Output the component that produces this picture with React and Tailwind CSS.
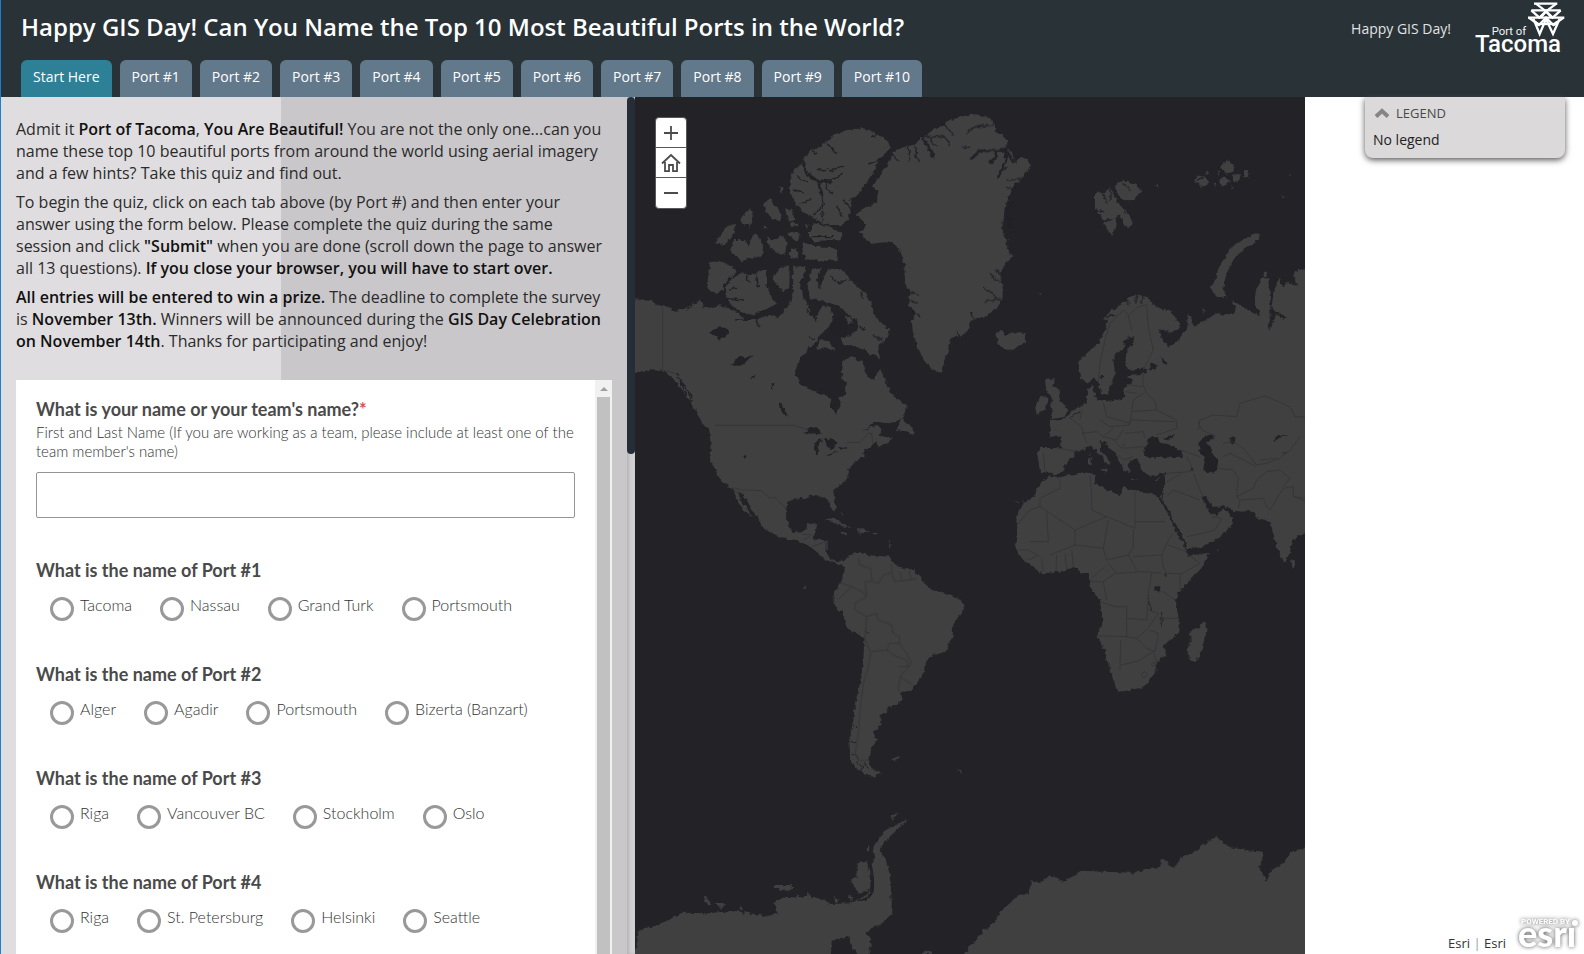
import React, { useState } from 'react';

const tabs = ['Start Here', 'Port #1', 'Port #2', 'Port #3', 'Port #4', 'Port #5', 'Port #6', 'Port #7', 'Port #8', 'Port #9', 'Port #10'];

const questions = [
  { id: 'port1', title: 'What is the name of Port #1', options: ['Tacoma', 'Nassau', 'Grand Turk', 'Portsmouth'] },
  { id: 'port2', title: 'What is the name of Port #2', options: ['Alger', 'Agadir', 'Portsmouth', 'Bizerta (Banzart)'] },
  { id: 'port3', title: 'What is the name of Port #3', options: ['Riga', 'Vancouver BC', 'Stockholm', 'Oslo'] },
  { id: 'port4', title: 'What is the name of Port #4', options: ['Riga', 'St. Petersburg', 'Helsinki', 'Seattle'] },
];

const PortLogo = () => (
  <svg viewBox="0 0 300 168" className="h-14 w-[100px] overflow-visible" role="img" aria-label="Port of Tacoma">
    <g fill="none" stroke="#fff" strokeWidth="7">
      <path d="M192 11h70M184 31h88M174 53h109" />
      <path d="M198 11l30 23 31-23M184 31l24 22 20-19 20 19 24-22" />
      <path d="M176 53l31 22 21-22 22 22 31-22" />
      <path d="M190 56l19 46 19-45 21 45 20-46M207 75l-12-10M250 75l12-10M228 34v0M212 53l16-19 18 19" />
      <path d="M196 72h66" />
    </g>
    <text x="65" y="104" fill="#f1f2f3" fontFamily="Roboto, sans-serif" fontSize="34">Port of</text>
    <text x="15" y="155" fill="#fff" fontFamily="Roboto, sans-serif" fontSize="72" fontWeight="500">Tacoma</text>
  </svg>
);

const WorldMap = () => (
  <svg viewBox="635 97 670 857" preserveAspectRatio="xMinYMin slice" className="block h-full w-full bg-[#232227]" aria-hidden="true">
    <defs>
      <filter id="coast" filterUnits="userSpaceOnUse" x="600" y="60" width="760" height="940">
        <feTurbulence type="fractalNoise" baseFrequency="0.22" numOctaves="2" seed="4" result="noise" />
        <feDisplacementMap in="SourceGraphic" in2="noise" scale="5" xChannelSelector="R" yChannelSelector="G" />
      </filter>
    </defs>
    <g filter="url(#coast)" fill="#3f3f41">
      {/* North America */}
      <g transform="translate(630 90) scale(.3333)">
        <path d="M-30 622L15 628 60 632 100 650 140 662 165 655 190 640 210 628 218 650 235 655 270 645 300 660 330 672 345 690 375 690 400 680 420 675 445 685 470 650 480 640 490 600 485 560 490 530 530 528 520 560 510 580 515 610 530 640 556 690 575 645 600 655 610 680 600 710 570 735 560 760 540 770 525 790 505 815 495 850 510 880 530 895 570 910 600 922 602 950 620 975 632 945 625 925 645 915 648 880 635 860 640 810 670 800 700 820 712 860 730 870 750 835 765 870 785 910 815 935 828 945 825 965 820 980 800 995 775 1000 735 995 700 1025 735 1005 755 1015 750 1035 770 1045 790 1042 770 1060 740 1073 745 1055 725 1065 700 1085 700 1100 675 1115 655 1140 655 1165 630 1185 610 1200 612 1225 618 1255 612 1265 600 1250 592 1225 570 1217 540 1217 520 1227 490 1225 470 1245 468 1280 475 1310 490 1325 510 1328 530 1320 535 1302 560 1300 555 1320 550 1348 590 1352 590 1390 600 1410 620 1413 635 1408 650 1420 640 1428 620 1422 585 1410 568 1392 540 1370 500 1350 475 1350 430 1332 400 1315 390 1290 360 1255 340 1215 325 1202 330 1230 350 1255 368 1285 345 1265 325 1240 310 1200 275 1175 255 1140 243 1110 240 1040 238 1020 215 1000 205 975 180 935 150 890 120 855 95 843 50 840 15 850 -30 850Z" />
        <path d="M518 210L545 180 575 165 610 135 650 120 700 115 740 130 775 155 780 175 750 205 735 235 715 270 690 305 665 330 665 355 655 385 635 405 600 405 575 400 560 385 540 380 520 365 500 345 480 310 480 270 495 235 512 228Z" />
        <path d="M535 430L550 400 600 410 637 430 635 450 590 450 550 455ZM515 455L560 470 600 470 622 480 620 510 580 512 530 508 518 490Z" />
        <path d="M290 580L330 550 375 555 390 540 408 540 410 590 425 625 440 645 400 660 370 675 330 665 300 640 285 610ZM240 515L280 515 305 530 320 545 285 580 275 605 255 612 230 590Z" />
        <path d="M300 480L315 450 345 450 355 475 370 430 385 440 400 470 395 500 355 505 335 515ZM255 460L290 410 315 405 310 435 280 465ZM335 380L360 355 368 375 360 410 335 400ZM400 335L420 328 445 355 455 390 430 390 405 360ZM465 355L485 360 495 390 475 395ZM410 440L435 450 460 435 470 460 465 495 440 490 415 465ZM480 480L500 475 505 505 480 505ZM475 425L510 430 505 450 485 450ZM480 400L505 398 505 406 482 408ZM447 292L458 290 458 305 452 310ZM400 400L412 418 405 420ZM525 402L536 405 530 418Z" />
        <path d="M430 560L455 530 480 530 478 590 460 605 435 575ZM545 540L575 533 560 570 570 600 580 560 595 535 640 540 660 570 700 605 725 640 735 680 778 720 765 750 745 765 750 805 715 790 690 770 640 765 635 745 665 735 685 710 680 690 650 670 620 645 585 635 540 625 533 590ZM560 780L570 745 600 760 614 783 590 775Z" />
        <path d="M645 682l18 -2 8 14 -16 8zM800 1020L815 980 830 1000 850 1015 850 1035 835 1025Z" />
        <path d="M580 1290L605 1285 640 1300 665 1315 640 1310 610 1297ZM680 1315L700 1315 718 1327 690 1332ZM728 1329h14v4h-14zM635 1329h15v4h-15zM632 1265l8 10 -3 6zM778 1345l4 15 -2 20 -3 -10z" />
      </g>
      {/* Greenland and Iceland */}
      <g transform="translate(880 100) scale(.3333)">
        <path d="M-70 345L-60 330 -10 310 -5 272 -25 262 0 225 25 195 40 160 60 145 100 135 130 110 160 90 200 68 240 47 290 43 330 55 345 75 345 95 365 105 383 122 375 140 395 155 405 190 420 172 445 178 453 195 440 215 420 240 400 260 390 285 375 320 370 370 365 400 385 420 385 450 400 468 375 495 360 520 368 560 368 600 350 625 310 650 280 657 262 690 240 708 210 715 205 750 190 790 183 818 145 800 120 760 100 710 95 660 110 640 85 615 90 580 75 540 72 490 60 450 40 430 0 425 -30 430 -60 400 -40 375Z" />
        <path d="M345 700L365 690 375 708 410 695 435 700 435 725 395 752 360 740ZM475 583l10 -4 -3 6z" />
      </g>
      {/* South America */}
      <g transform="translate(630 400) scale(.3333)">
        <path d="M640 485L660 465 690 455 710 465 750 468 780 470 790 490 820 507 850 510 870 530 880 550 920 575 965 585 1000 605 1005 625 985 650 970 675 968 710 945 757 910 765 888 785 885 815 860 850 840 875 810 875 818 895 805 915 773 920 770 940 748 945 755 960 745 985 728 1000 742 1020 720 1050 715 1080 725 1105 755 1120 730 1130 700 1120 675 1100 660 1070 658 1020 670 960 675 910 690 850 700 780 703 715 655 685 635 640 610 605 612 575 640 535 645 500ZM780 1078L810 1068 800 1084ZM978 1106l16 8 2 8zM522 560h6v6h-6z" />
      </g>
      {/* Northern Europe and Russia */}
      <g transform="translate(1000 160) scale(.3333)">
        <path d="M960 325L885 330 880 350 895 380 860 365 850 385 835 350 828 380 820 400 815 440 825 455 860 470 855 480 825 460 815 500 805 515 812 470 810 410 808 355 785 355 765 400 765 430 780 465 760 460 720 435 695 420 710 455 680 465 650 460 600 490 580 500 575 470 560 465 565 500 530 545 505 560 490 545 475 505 515 518 540 505 540 485 510 455 470 440 450 420 410 400 370 425 330 455 310 475 325 480 315 510 295 550 265 575 235 605 240 650 260 668 285 655 295 665 305 705 325 700 335 670 345 640 340 600 350 575 370 570 375 545 385 530 405 530 400 550 380 575 375 600 385 630 440 625 440 640 390 645 380 652 400 665 375 680 372 715 330 725 300 720 290 726 285 700 275 675 262 690 260 730 235 740 205 765 180 785 150 805 150 830 960 830Z" />
        <path d="M135 660L165 655 160 680 175 685 180 720 205 750 190 772 150 778 160 755 150 740 160 715 140 695ZM120 712L142 712 140 745 110 765 105 740Z" />
        <path d="M765 220L780 222 775 240 730 270 700 300 680 340 670 380 680 415 650 410 630 385 645 360 660 315 690 265 720 245Z" />
        <path d="M285 100L315 95 330 85 345 110 360 135 385 165 398 190 385 205 372 190 355 160 345 200 335 230 315 200 305 170 285 150ZM345 75L370 62 410 72 425 95 400 122 370 120 350 100ZM462 76l14 -4 -4 10zM605 445l12 5 -6 12z" />
        <path d="M580 55l22 -10 15 5 12 20 -20 12 -18 -10zM660 20l20 -20 10 10 16 5 -8 20 -20 10zM700 45l20 -5 -6 25 -14 -2zM730 30l18 0 -6 22 -12 -2zM655 60l22 -8 18 14 -30 15zM640 68l10 3 -5 10zM865 45l10 -5 -4 8zM790 338l14 0 -2 10 -10 0zM618 30l10 8 -8 8zM655 30l8 4 -6 12zM695 75l8 8 -8 4zM845 105l8 6 -6 2z" />
      </g>
      {/* Southern Europe, Asia and Africa */}
      <g transform="translate(1000 400) scale(.3333)">
        <path d="M150 80L185 100 183 145 120 143 112 165 120 215 150 218 170 225 185 215 195 195 220 170 225 155 250 150 275 135 290 155 310 175 325 195 332 185 300 150 300 120 315 130 350 165 360 190 375 215 390 215 385 190 392 180 415 175 425 215 450 228 495 220 498 240 490 270 480 290 500 320 520 360 550 410 562 445 600 440 640 425 690 385 700 355 670 325 650 345 630 340 605 290 615 290 640 320 675 320 700 333 760 335 780 360 812 365 820 410 850 490 870 460 875 425 900 405 960 380 960 60 150 60Z" />
        <path d="M150 228L140 235 110 265 105 290 70 310 50 350 48 400 50 430 45 445 70 480 125 520 180 515 225 500 240 520 270 520 270 560 300 600 308 655 293 710 315 750 330 810 350 870 365 875 430 862 470 810 470 785 495 770 492 735 535 700 537 655 525 600 550 560 600 510 628 458 565 467 550 430 525 390 510 350 485 310 470 285 440 280 405 270 370 262 360 285 320 270 285 250 285 222 240 218 180 232Z" />
        <path d="M570 695L600 680 612 663 620 690 600 770 585 783 565 775 563 750 572 725ZM875 475L888 495 880 507 873 500ZM300 208L322 206 316 218ZM264 175L274 175 272 195 264 195ZM268 152L273 165 266 168ZM392 236L415 238 395 241ZM465 238L482 233 470 243ZM48 305L60 308 50 309ZM70 300l5 8h-5zM648 450h8v3h-8z" />
      </g>
      {/* Antarctica */}
      <g transform="translate(630 780) scale(.4337 .3333)">
        <path d="M-20 560L15 500 20 450 50 440 80 425 120 398 180 400 240 392 300 405 320 410 340 400 330 370 350 350 380 352 430 350 460 372 510 370 545 345 560 325 555 260 565 230 560 200 590 150 640 118 620 145 590 180 575 210 590 240 600 290 605 400 580 430 545 458 557 490 550 522 525 522 510 500 505 468 465 482 462 560Z" />
        <path d="M525 250L545 240 552 280 555 330 525 338 508 300 525 290ZM330 315L370 315 375 330 345 332ZM168 350L178 355 190 375 180 375ZM195 368L222 370 210 388ZM600 110l20 -15 -15 25zM545 210l8 -20 -2 25zM470 350l10 10 -5 12zM505 345l8 8 -4 12zM255 375l5 15h-8zM385 340l5 14h-8zM412 335l6 16h-10z" />
        <path d="M760 540L815 450 840 430 855 395 895 345 920 340 925 300 940 310 970 285 1000 305 1040 272 1160 278 1220 260 1225 235 1255 265 1270 235 1310 210 1335 180 1355 170 1380 200 1420 210 1460 215 1450 265 1468 302 1480 270 1510 245 1520 220 1600 185 1600 560 760 560ZM672 522L680 508 698 522Z" />
      </g>
      {/* lakes and inland seas */}
      <g fill="#232227">
        <g transform="translate(630 90) scale(.3333)">
          <path d="M235 730L265 712 298 715 290 735 270 752 260 735ZM305 825L325 800 345 805 370 793 345 818 325 828ZM355 865L380 853 375 862ZM425 880l8 0 -6 22zM445 940L455 940 475 980 460 975ZM520 1030L540 1015 560 1010 578 1030 560 1033 545 1030ZM555 1095L555 1060 570 1045 578 1048 565 1070 563 1095ZM585 1050L605 1045 620 1060 605 1080 592 1070ZM592 1095L628 1082 600 1098ZM625 1075L652 1068 650 1075 630 1079ZM337 1097l10 3 -3 7zM605 690L640 680 655 710 640 745 605 725Z" />
        </g>
        <g transform="translate(1000 160) scale(.3333)">
          <path d="M450 605L470 615 465 632 452 628ZM485 590L500 605 498 615 488 608ZM300 648L312 648 304 658Z" />
        </g>
        <g transform="translate(1000 400) scale(.3333)">
          <path d="M430 165L445 115 470 108 480 125 500 130 545 155 545 170 500 172 450 175ZM490 118L525 101 512 122ZM595 130L615 108 640 103 640 120 620 125 640 165 655 180 650 215 625 220 610 205 615 180 600 150ZM690 115L712 110 703 118 705 135 695 130ZM820 120L835 105 868 107 838 110 826 124ZM845 158L860 156 852 160ZM463 560L482 558 480 577 463 575Z" />
        </g>
      </g>
      {/* fjords and channels */}
      <g fill="none" stroke="#232227" strokeLinecap="round" strokeLinejoin="round">
        <g transform="translate(630 90) scale(.3333)">
          <path strokeWidth="9" d="M520 215L530 250 560 272 600 275 M565 275L575 310" />
          <path strokeWidth="4" d="M600 275L640 250M600 245L640 225M575 310L580 345 550 375M585 280L605 310M590 160L620 190M500 260L530 275M490 300L520 305M510 340L540 330M580 345L575 380M715 225L750 205M660 330L690 325M560 240L600 238M540 180L560 190M725 140l20 -10M620 350l20 30M640 330l25 30M550 440l60 0M580 400l0 -25" />
          <path strokeWidth="4" d="M290 625L340 630M350 560L360 580M380 555L385 590M300 600L320 590M560 690L530 660M605 560L625 580 650 568M690 710L705 720M730 735L755 750M690 605l10 20M320 690L380 685 385 710M540 740l15 10M140 855L185 920 180 950M170 660L200 635M150 870l20 50" />
        </g>
        <g transform="translate(880 100) scale(.3333)">
          <path strokeWidth="8" d="M275 175L300 152 350 152 378 150 378 180 355 230M350 155L345 175 330 187M130 115L160 170M378 150L400 185" />
          <path strokeWidth="4" d="M155 110L190 108 207 125 208 138M85 140L90 180M105 140L115 185M35 160L55 185M190 70L220 105M260 100L285 80 340 75M140 105L170 140M245 142L275 142M380 240L420 238M380 265L405 262M375 330L400 310M365 370L395 380M390 290L385 350 395 380M375 400L390 460M330 520L360 550M345 510L365 525M310 565L340 580 345 595 365 602M345 600L315 605M85 575L115 585M85 600L110 610M100 635L120 650M230 695l10 15M275 640l8 18" />
        </g>
        <g transform="translate(1000 160) scale(.3333)">
          <path strokeWidth="4" d="M310 100L320 130M330 90L330 120M285 150L310 155M310 180L335 180M370 70L390 90M320 470L350 465M380 420L385 435M410 402L408 430M430 410L425 430M655 20L700 70M670 40l30 0M590 60l30 -10M0 40L20 20" />
        </g>
        <g transform="translate(1000 400) scale(.3333)">
          <path strokeWidth="3" d="M445 585L447 610 455 632M485 640L487 675M578 205L580 215M488 280L486 300M498 520v10M240 35l-30 18" />
        </g>
        <g transform="translate(630 400) scale(.3333)">
          <path strokeWidth="3" d="M665 970l12 10M662 1020l12 8M665 1060l20 15M680 1090l20 10M700 1085l15 20M690 1110l15 -10M710 695l3 4" />
        </g>
        <path strokeWidth="2" d="M869 861q5 12 4 28q-2 10-14 12" />
      </g>
    </g>
    {/* country borders */}
    <g fill="none" stroke="#343437" strokeWidth="2.4" strokeLinejoin="round">
      <g transform="translate(630 90) scale(.3333)">
        <path d="M98 650V840L135 850M255 1006H490L530 1018M650 1058L690 1057 715 1030 725 1030 728 1060M305 1193L340 1200 395 1202 420 1225 435 1222 470 1258M515 1332L545 1335M520 1350L540 1340M545 1370L588 1355" />
      </g>
      <g transform="translate(630 400) scale(.3333)">
        <path d="M685 475L690 495 722 505 725 545 745 550 760 525 785 518 785 490M785 518L795 545 860 537M810 515L815 540M838 512L842 537M722 545L705 545 710 590 700 578 665 560 635 550 M665 560L625 598M710 590L675 610 675 630 710 650 740 640 745 660 785 675 790 700 808 710 808 730 780 730 770 750 800 770 830 780 835 800 805 800M710 650L705 715 720 755 770 750M722 758L715 800 700 850 690 930 685 1000 675 1060 685 1082 715 1082M808 730L830 760 845 790 810 830 848 855M810 830L805 875" />
      </g>
      <g transform="translate(1000 160) scale(.3333)">
        <path d="M295 665L300 610 315 540 330 490 370 450 385 465 415 440 440 435 445 500 460 570 430 630M385 465L395 510M430 642L428 670 440 700 465 725 470 750M390 675L428 680M375 695L410 700M395 755L400 720 430 700M310 727L320 770 390 790 395 755 470 750 530 780M595 810L600 780 640 765 710 770 720 730 795 708 870 740 885 770 960 775" />
      </g>
      <g transform="translate(1000 400) scale(.3333)">
        <path d="M180 145L230 155M130 160L135 215M210 55L245 80 250 100 260 130M245 30L240 60M300 60L330 80 390 75M245 100L290 95 310 110 340 85M310 110L350 120 370 90M340 120L365 145 375 130M385 75L395 60 530 65 530 85 470 105M375 100L430 95 435 115M370 145L435 140M355 165L370 180 400 170M500 220L570 215 575 200 560 170M540 150L600 170M500 245L545 220M500 290L520 270 600 300M560 410L610 400 645 390 665 355 635 350M580 220L600 270 610 290M655 205L700 210 715 235 710 290 720 300 715 325M710 290L760 265 770 240 800 215M720 300L790 295 800 320 810 330 850 265 880 260 880 290 960 300M670 130L700 125 730 145 770 195 800 190 840 175 870 150 900 110M670 170L690 160 770 200M780 180L830 175M800 215L840 210 870 235 850 260M880 290L960 320M595 65L605 90 640 105" />
        <path d="M180 235L180 265 120 295 120 320 225 390 320 350 275 330 275 280 270 225M405 275V385L320 350M405 365H495M120 320L90 330 50 375M140 335L145 425 90 425M225 390L225 435 150 465M225 435L310 445 325 360M310 445L320 480 385 465 400 440 400 390M325 490L350 520 430 515 485 520M385 465L410 510M400 470L485 465 505 420 520 400M485 465L490 500 500 520 545 522 600 490 560 460M505 435L560 455M315 500L270 540M270 545L310 545 345 520M310 545L320 600M300 605L345 620 380 620 380 655 440 660 445 580 455 520M380 655L380 710 295 708M380 710L410 715 440 690 475 640 445 630M475 655L535 655M410 715L440 745 465 755 475 700 450 690M360 810L362 720M362 795L410 785 460 755 470 785M490 575L525 600M540 525L540 570M195 460L200 510M170 465L168 515M125 475L130 515M80 480L110 470M215 450L220 500M55 450L85 450 120 470" />
        <circle cx="433" cy="824" r="8" />
        <circle cx="461" cy="793" r="6" />
      </g>
    </g>
  </svg>
);

const MapControls = () => (
  <div className="absolute top-5 left-5 flex w-8 flex-col divide-y divide-[#57585a] overflow-hidden rounded border border-[#57585a] bg-white text-[#4c4c4c]">
    <button aria-label="Zoom in" className="flex h-[30px] items-center justify-center">
      <svg viewBox="0 0 16 16" className="size-4" fill="none" stroke="currentColor" strokeWidth="1.8"><path d="M8 1v14M1 8h14" /></svg>
    </button>
    <button aria-label="Default extent" className="flex h-[30px] items-center justify-center">
      <svg viewBox="0 0 20 20" className="size-5" fill="none" stroke="currentColor" strokeWidth="1.8">
        <path d="M1 10.500L10 2l9 8.500M4 9v9.200h4V12h4v6.200h4V9" />
      </svg>
    </button>
    <button aria-label="Zoom out" className="flex h-[30px] items-center justify-center">
      <svg viewBox="0 0 16 16" className="size-4" fill="none" stroke="currentColor" strokeWidth="1.8"><path d="M1 8h14" /></svg>
    </button>
  </div>
);

const Question = ({ question, value, onChange }) => (
  <fieldset className="pb-[39px]">
    <legend className="text-lg leading-6 font-bold text-[#4a4a4a]">{question.title}</legend>
    <div className="mt-[11px] flex gap-7 pl-[14px]">
      {question.options.map((option) => (
        <label key={option} className="flex h-[30px] gap-1.5 text-base leading-6 font-light text-[#333]">
          <input
            type="radio"
            name={question.id}
            checked={value === option}
            onChange={() => onChange(question.id, option)}
            className="mt-1 size-6 shrink-0 appearance-none rounded-full border-3 border-[#999] bg-white checked:bg-[#999]"
          />
          {option}
        </label>
      ))}
    </div>
  </fieldset>
);

const App = () => {
  const [activeTab, setActiveTab] = useState('Start Here');
  const [legendOpen, setLegendOpen] = useState(true);
  const [teamName, setTeamName] = useState('');
  const [answers, setAnswers] = useState({});

  const handleAnswer = (id, option) => setAnswers({ ...answers, [id]: option });

  return (
    <div className="flex h-screen flex-col overflow-hidden border-l border-[#1b7fd0] bg-white font-['Open_Sans',sans-serif]">
      <header className="flex h-[97px] shrink-0 justify-between bg-[#283237] pl-5 text-white">
        <div className="flex flex-col justify-between">
          <h1 className="pt-[7px] text-2xl leading-10 font-semibold">Happy GIS Day! Can You Name the Top 10 Most Beautiful Ports in the World?</h1>
          <nav className="flex gap-2">
            {tabs.map((tab) => (
              <button
                key={tab}
                onClick={() => setActiveTab(tab)}
                className={`h-[37px] rounded-t-md px-3 pb-1 text-sm font-medium ${activeTab === tab ? 'bg-[#2e8097]' : 'bg-[#62788b]'}`}
              >
                {tab}
              </button>
            ))}
          </nav>
        </div>
        <div className="flex items-start gap-[19px] pr-[14px]">
          <a href="#gis-day" className="pt-[19px] text-sm text-[#e0e2e3]">Happy GIS Day!</a>
          <PortLogo />
        </div>
      </header>

      <main className="grid min-h-0 flex-1 grid-cols-[634fr_670fr_279fr]">
        <section className="flex min-h-0 min-w-0 bg-[linear-gradient(to_right,#dfdddf_280px,#c9c7ca_280px)]">
          <div className="flex min-w-0 flex-1 flex-col px-[15px]">
            <div className="space-y-[7px] pt-[21px] pb-7 text-base leading-[22px] text-[#2b2b2b]">
              <p>
                Admit it <strong className="font-semibold text-[#111]">Port of Tacoma</strong>, <strong className="font-semibold text-[#111]">You Are Beautiful!</strong> You are not the only one...can you name these top 10 beautiful ports from around the world using aerial imagery and a few hints? Take this quiz and find out.
              </p>
              <p>
                To begin the quiz, click on each tab above (by Port #) and then enter your answer using the form below. Please complete the quiz during the same session and click <strong className="font-semibold text-[#111]">"Submit"</strong> when you are done (scroll down the page to answer all 13 questions). <strong className="font-semibold text-[#111]">If you close your browser, you will have to start over.</strong>
              </p>
              <p>
                <strong className="font-semibold text-[#111]">All entries will be entered to win a prize.</strong> The deadline to complete the survey is <strong className="font-semibold text-[#111]">November 13th.</strong> Winners will be announced during the <strong className="font-semibold text-[#111]">GIS Day Celebration on November 14th</strong>. Thanks for participating and enjoy!
              </p>
            </div>

            <div className="flex min-h-0 flex-1 bg-white font-[Lato,sans-serif]">
              <form className="min-w-0 flex-1 overflow-hidden px-5 pt-[17px]">
                <div className="pb-10">
                  <label htmlFor="team-name" className="block text-lg leading-6 font-bold text-[#4a4a4a]">
                    What is your name or your team's name?<span className="text-[#d9534f]">*</span>
                  </label>
                  <p id="team-hint" className="mt-[2px] text-[15px] leading-[19px] font-light text-[#333]">
                    First and Last Name (If you are working as a team, please include at least one of the team member's name)
                  </p>
                  <input
                    id="team-name"
                    type="text"
                    aria-describedby="team-hint"
                    value={teamName}
                    onChange={(e) => setTeamName(e.target.value)}
                    className="mt-[11px] h-[46px] w-full rounded-xs border border-[#959595] bg-white px-3 outline-none"
                  />
                </div>
                {questions.map((question) => (
                  <Question key={question.id} question={question} value={answers[question.id]} onChange={handleAnswer} />
                ))}
              </form>
              {/* form scrollbar */}
              <div className="flex w-[17px] shrink-0 flex-col items-center bg-[#f1f1f1]">
                <span className="flex h-[17px] items-center justify-center">
                  <svg viewBox="0 0 8 4" className="h-1 w-2" fill="#a0a0a0"><path d="M0 4L4 0l4 4z" /></svg>
                </span>
                <span className="w-[13px] flex-1 bg-[#c1c1c1]" />
              </div>
            </div>
          </div>
          {/* panel scrollbar */}
          <div className="w-2 shrink-0 bg-[#d1cfd1] shadow-[inset_2px_0_3px_#b5b3b6]">
            <div className="h-[357px] rounded-full bg-[#252e36]" />
          </div>
        </section>

        <section className="relative min-h-0 min-w-0 overflow-hidden bg-[#232227]">
          <WorldMap />
          <MapControls />
        </section>

        <aside className="flex flex-col items-end justify-between pr-[19px]">
          <div className="h-[61px] w-[200px] rounded-b-lg bg-[#dbd9da] px-2 pt-1.5 shadow-[0_2px_6px_#555]">
            <button onClick={() => setLegendOpen(!legendOpen)} className="flex items-center gap-[5px] text-[13px] leading-5 font-medium text-[#4a4a4a]">
              <svg viewBox="0 0 18 12" className="h-3 w-[18px]" fill="none" stroke="#858585" strokeWidth="4"><path d="M3 9.500l6-5.500 6 5.500" /></svg>
              LEGEND
            </button>
            {legendOpen && <p className="mt-[7px] text-sm leading-5 text-[#222]">No legend</p>}
          </div>
          <footer className="-mr-[15px] flex items-end gap-3 pb-px text-[13px] text-[#323232]">
            <p>
              <a href="#attribution">Esri</a> <span className="text-[#8aa0b8]">|</span> <a href="#esri">Esri</a>
            </p>
            <svg viewBox="0 0 62 38" className="h-[38px] w-[62px] overflow-visible drop-shadow-[0_0_2px_#555]" fill="#fff" role="img" aria-label="Powered by Esri">
              <text x="3" y="9" fontFamily="Roboto, sans-serif" fontSize="8" fontWeight="700">POWERED BY</text>
              <text x="0" y="32" fontFamily="Lato, sans-serif" fontSize="36" fontWeight="900">esrı</text>
              <circle cx="57" cy="8" r="3" />
            </svg>
          </footer>
        </aside>
      </main>
    </div>
  );
};

export default App;
